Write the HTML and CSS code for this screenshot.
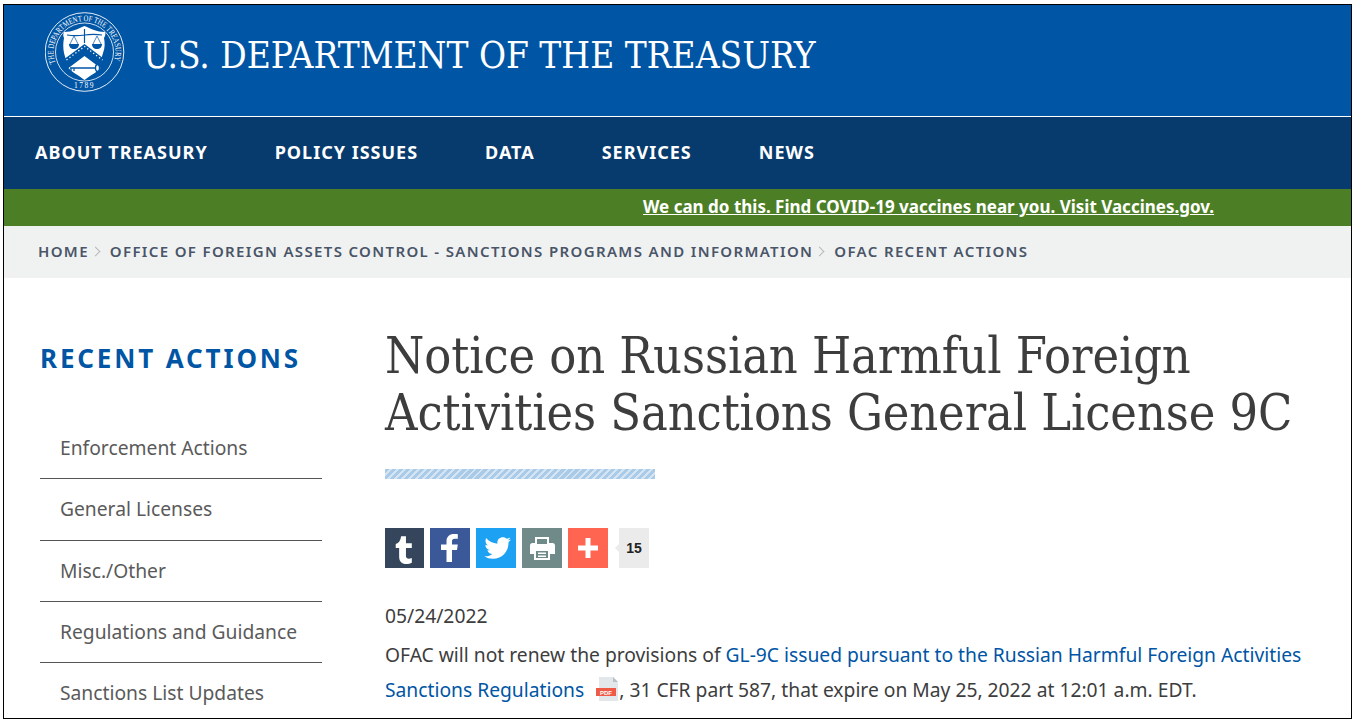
FILE: index.html
```html
<!DOCTYPE html>
<html lang="en">
<head>
<meta charset="utf-8">
<title>Notice on Russian Harmful Foreign Activities Sanctions General License 9C</title>
<link rel="stylesheet" href="styles.css">
</head>
<body>
<div class="frame">
  <header class="masthead">
    <svg class="seal" viewBox="0 0 80 80" width="80" height="80" aria-hidden="true">
      <defs><path id="ring" d="M 10.500 51 A 31 31 0 1 1 68.500 51"/></defs>
      <circle cx="39.500" cy="40" r="39.300" fill="none" stroke="#fff" stroke-width=".9"/>
      <circle cx="39.500" cy="40" r="29" fill="none" stroke="#fff" stroke-width=".8"/>
      <text class="seal-text"><textPath href="#ring" textLength="117" lengthAdjust="spacingAndGlyphs">THE DEPARTMENT OF THE TREASURY</textPath></text>
      <text class="seal-year" x="39.500" y="76" text-anchor="middle">1789</text>
      <path fill="#fff" d="M19 20c4 0 8-1 11-2 3-1 5-2 7-3l2.500-1 2.500 1c2 1 4 2 7 3 3 1 7 2 11 2 1 2 0 4-1 6 1 5 1 10-1 15l-2 7-17-14-18 14-2-7c-1-5-1-10 0-15-1-2-1-4 0-6z"/>
      <path fill="#fff" d="M39.500 44l16 12c-2 2-4 4-6.500 5.500-3.500 2-6 4-9.500 6.500-3.500-2.500-6-4.500-9.500-6.500-2.500-1.500-4.500-3.500-6.500-5.500z"/>
      <path fill="none" stroke="#0055a5" stroke-width="1.200" d="M22 23c6 1 11 1 17.500 0s11-1 17.500 0M39.500 17v14"/>
      <path fill="none" stroke="#0055a5" stroke-width=".7" d="M29 24l-4 8M29 24l4 8M52 24l-4 8M52 24l4 8"/>
      <path fill="#0055a5" d="M24 32h10c0 3-2 5-5 5s-5-2-5-5zM47 32h10c0 3-2 5-5 5s-5-2-5-5z"/>
      <path fill="#0055a5" d="M39.500 32l21 16-1.500 4-19.500-15-19.500 15-2-4z"/>
      <path fill="none" stroke="#fff" stroke-width="1.300" stroke-dasharray="1.300 2.400" d="M21.500 48l18-13.500 18 13.500"/>
      <path fill="none" stroke="#0055a5" stroke-width="1.500" d="M25 56h27"/>
      <path fill="none" stroke="#0055a5" stroke-width="1.200" d="M26 56v3M29 56v3"/>
      <ellipse cx="52.500" cy="56" rx="2" ry="3.500" fill="#fff" stroke="#0055a5" stroke-width="1.300"/>
    </svg>
    <a class="wordmark" href="#">U.S. DEPARTMENT OF THE TREASURY</a>
  </header>
  <nav class="mainnav">
    <a href="#">ABOUT TREASURY</a>
    <a href="#">POLICY ISSUES</a>
    <a href="#">DATA</a>
    <a href="#">SERVICES</a>
    <a href="#">NEWS</a>
  </nav>
  <div class="alert"><a href="#">We can do this. Find COVID-19 vaccines near you. Visit Vaccines.gov.</a></div>
  <div class="crumbs">
    <a href="#">HOME</a><span class="sep"></span>
    <a href="#">OFFICE OF FOREIGN ASSETS CONTROL - SANCTIONS PROGRAMS AND INFORMATION</a><span class="sep"></span>
    <a href="#">OFAC RECENT ACTIONS</a>
  </div>
  <div class="content">
    <aside class="side">
      <h2>RECENT ACTIONS</h2>
      <ul>
        <li>Enforcement Actions</li>
        <li>General Licenses</li>
        <li>Misc./Other</li>
        <li>Regulations and Guidance</li>
        <li>Sanctions List Updates</li>
      </ul>
    </aside>
    <main class="article">
      <h1>Notice on Russian Harmful Foreign Activities Sanctions General License 9C</h1>
      <div class="hatch"></div>
      <div class="share">
        <a class="btn tumblr" href="#"><svg viewBox="0 0 40 40" width="39" height="40"><path fill="#fff" d="M21.500 8v7h6v5h-6v8c0 2 1 3 3 3 1 0 2-.3 3-.8v5c-1.500.8-3.500 1.300-5.500 1.300-5 0-7.500-3-7.500-7.500v-9h-3.500v-4c3.500-1 5-4 5.500-8z"/></svg></a>
        <a class="btn facebook" href="#"><svg viewBox="0 0 40 40" width="40" height="40"><path fill="#fff" d="M22 34V22h5l.8-5.500H22v-3c0-1.700.7-2.700 2.800-2.700h3V6.200C27 6 25.500 6 24 6c-4.500 0-7.500 2.700-7.500 7.200v3.300H11V22h5.500v12z"/></svg></a>
        <a class="btn twitter" href="#"><svg viewBox="0 0 24 24" width="40" height="40"><path fill="#fff" d="M19.500 8.700v.4c0 4.600-3.500 9.400-9.500 9.400-1.900 0-3.600-.5-5-1.500h.8c1.500 0 2.900-.5 4-1.400-1.400 0-2.600-1-3-2.300.5.100 1 .1 1.500-.1-1.500-.3-2.700-1.600-2.700-3.200.5.300 1 .4 1.500.4-1.400-.9-1.800-2.800-1-4.400 1.600 2 4 3.200 6.800 3.400-.5-2 1-3.900 3.200-3.900 1 0 1.800.4 2.400 1 .7-.1 1.400-.4 2-.8-.2.700-.7 1.300-1.400 1.700.6-.1 1.300-.2 1.900-.5-.5.7-1.100 1.300-1.700 1.800z"/></svg></a>
        <a class="btn print" href="#"><svg viewBox="0 0 40 40" width="40" height="40"><path fill="#fff" fill-rule="evenodd" d="M13 9h14v6h3.500c1.500 0 2.500 1 2.500 2.500V26h-5v6H12v-6H8v-8.500C8 16 9 15 10.500 15H13zm2 2v5h10v-5zm-1 12v7h12v-7zm2 1.500h8v1.500h-8zm0 3h8V29h-8z"/></svg></a>
        <a class="btn more" href="#"><svg viewBox="0 0 40 40" width="40" height="40"><path fill="#fff" d="M17.500 10h5v7.500H30v5h-7.500V30h-5v-7.500H10v-5h7.500z"/></svg></a>
        <span class="count">15</span>
      </div>
      <p class="date">05/24/2022</p>
      <p class="lede">OFAC will not renew the provisions of <a href="#">GL-9C issued pursuant to the Russian Harmful Foreign Activities Sanctions Regulations</a> <svg class="pdf" viewBox="0 0 24 26" width="24" height="26" aria-hidden="true"><path fill="#e3e7ea" d="M4 1h14l5 5v19H4z"/><path fill="#b9c0c5" d="M18 1l5 5h-5z"/><rect x="1" y="12" width="20" height="8" fill="#ef5a47"/><text class="pdf-label" x="11" y="18.500" text-anchor="middle">PDF</text></svg>, 31 CFR part 587, that expire on May 25, 2022 at 12:01 a.m. EDT.</p>
    </main>
  </div>
</div>
</body>
</html>
```
FILE: styles.css
```css
* { box-sizing: border-box; }
html, body { margin: 0; height: 720px; overflow: hidden; background: #fff; }
a { color: inherit; text-decoration: none; }
.frame {
  margin: 4px 2px 1px 3px;
  height: 715px;
  border: 1px solid #000;
  overflow: hidden;
  font-family: "Noto Sans", sans-serif;
}
.masthead {
  height: 112px;
  background: #0055a5;
  border-bottom: 1px solid #fff;
  display: flex;
  align-items: flex-start;
  padding: 7px 0 0 41px;
  color: #fff;
}
.seal { flex: none; }
.seal-text { font: 8.500px "Liberation Serif", serif; fill: #fff; }
.seal-year { font: 7.500px "Liberation Serif", serif; fill: #fff; letter-spacing: 1.500px; }
.wordmark {
  margin: 24px 0 0 18px;
  font: 36.700px/40px "DejaVu Serif Condensed", "Liberation Serif", serif;
  white-space: nowrap;
}
.mainnav {
  height: 72px;
  background: #073b6e;
  display: flex;
  align-items: center;
  gap: 67px;
  padding: 0 0 2px 31px;
  color: #fff;
  font-weight: 700;
  font-size: 18px;
  letter-spacing: 1px;
}
.alert {
  height: 37px;
  background: #4c7f25;
  color: #fff;
  font-weight: 700;
  font-size: 17px;
  line-height: 35px;
  padding-left: 639px;
}
.alert a { text-decoration: underline; }
.crumbs {
  height: 52px;
  background: #f0f2f2;
  display: flex;
  align-items: center;
  padding: 0 0 3px 34px;
  color: #4a5568;
  font-weight: 600;
  font-size: 15px;
  letter-spacing: 1.350px;
}
.sep {
  width: 7px; height: 7px;
  margin: 2px 11px 0 3px;
  border-top: 1px solid #b5b8b8;
  border-right: 1px solid #b5b8b8;
  transform: rotate(45deg);
}
.content { display: flex; padding-left: 36px; }
.side { width: 282px; flex: none; margin-right: 63px; }
.side h2 {
  margin: 63px 0 0;
  color: #0055a5;
  font-size: 26px;
  line-height: 34px;
  font-weight: 700;
  letter-spacing: 2.850px;
}
.side ul { list-style: none; margin: 43px 0 0; padding: 0; }
.side li {
  height: 61.330px;
  padding: 15px 0 0 20px;
  border-bottom: 1px solid #555;
  color: #5a5a5a;
  font-size: 19.250px;
  line-height: 30px;
}
.side li:last-child { border-bottom: 0; }
.article { flex: 1; color: #3d3d3d; }
.article h1 {
  margin: 50px 0 0;
  font: 300 50px/57px "DejaVu Serif Condensed", "Liberation Serif", serif;
  letter-spacing: -.1px;
  width: 930px;
}
.hatch {
  margin-top: 27px;
  width: 270px;
  height: 10px;
  background: repeating-linear-gradient(-45deg, #a9cbe8 0 3px, #d4e4f3 3px 5px);
}
.share { display: flex; align-items: stretch; gap: 6px; margin-top: 49px; height: 40px; }
.btn { display: block; width: 40px; height: 40px; }
.btn svg { display: block; }
.tumblr { background: #35465c; width: 39px; }
.facebook { background: #3b5998; }
.twitter { background: #1da1f2; }
.print { background: #708a8a; }
.more { background: #ff6550; }
.count {
  position: relative;
  margin-left: 5px;
  width: 30px;
  background: #ebebeb;
  color: #222;
  font: 700 14px/40px "Liberation Sans", sans-serif;
  text-align: center;
}
.count::before {
  content: "";
  position: absolute;
  left: -4px; top: 16px;
  border: 4px solid transparent;
  border-left: 0;
  border-right-color: #ebebeb;
}
.date { margin: 33px 0 0; font-size: 19.250px; line-height: 30px; }
.lede { margin: 6px 0 0; font-size: 19.250px; line-height: 35px; width: 930px; }
.lede a { color: #0055a5; }
.pdf { vertical-align: -5px; margin-left: 6px; }
.pdf-label { font: 700 6px "Liberation Sans", sans-serif; fill: #fff; }
```
